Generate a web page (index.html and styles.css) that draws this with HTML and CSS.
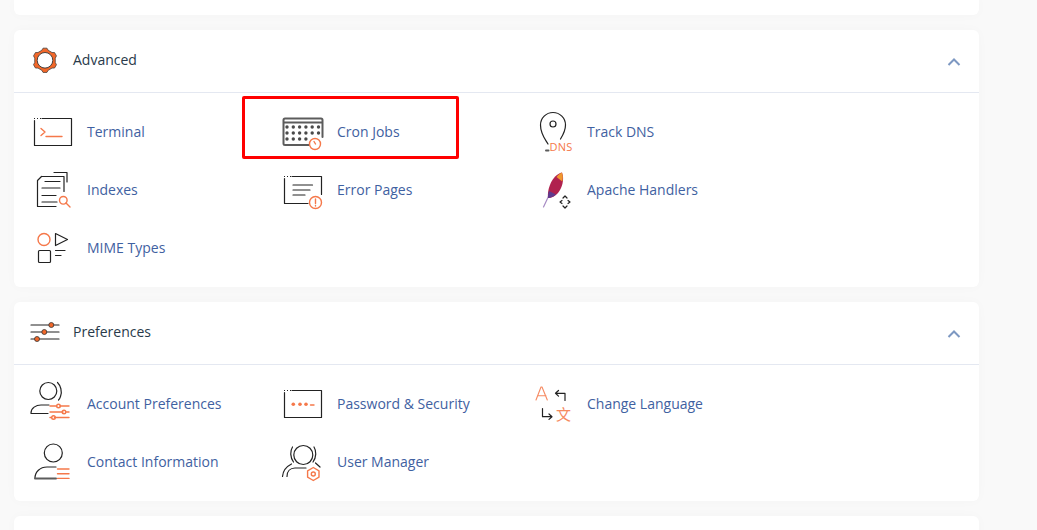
FILE: index.html
```html
<!DOCTYPE html>
<html lang="en">
<head>
<meta charset="utf-8">
<title>cPanel tools</title>
<link rel="stylesheet" href="styles.css">
</head>
<body>
<main class="page">
  <section class="card card-stub"></section>

  <section class="card">
    <header class="card-head">
      <svg class="head-icon" viewBox="30 39.500 42 42">
        <path class="gear-body" d="M41.760 50.810 43.080 48.650H46.920L48.240 50.810 52.030 53 54.560 53.060 56.480 56.390 55.270 58.620V62.980L56.480 65.210 54.560 68.540 52.030 68.600 48.240 70.790 46.920 72.950H43.080L41.760 70.790 37.970 68.600 35.440 68.540 33.520 65.210 34.730 62.980V58.620L33.520 56.390 35.440 53.060 37.970 53z"/>
        <circle class="gear-hole" cx="45" cy="60.800" r="7.800"/>
      </svg>
      <h2 class="card-title">Advanced</h2>
      <svg class="chevron" viewBox="0 0 14 8"><path d="M1.500 7 7 1.500 12.500 7"/></svg>
    </header>
    <div class="tools">
      <a class="tool">
        <svg class="tool-icon" viewBox="30 110 42 42">
          <path class="ink" d="M42 118.500h29.500v27h-37v-25"/>
          <path class="ink dots" d="M34 118.500h8"/>
          <path class="org" d="M41 128.500l4 3.500-4 3.500M46 136.500h16"/>
        </svg>
        <span>Terminal</span>
      </a>
      <a class="tool">
        <svg class="tool-icon" viewBox="280 110 42 42">
          <path class="thick" d="M309 145h-24a1.500 1.500 0 0 1-1.500-1.500V120a1.500 1.500 0 0 1 1.500-1.500h36a1.500 1.500 0 0 1 1.500 1.500v17M284 122.500h38"/>
          <g class="grey-dots">
            <circle cx="287" cy="127" r="1.700"/><circle cx="293.300" cy="127" r="1.700"/><circle cx="299.600" cy="127" r="1.700"/><circle cx="305.900" cy="127" r="1.700"/><circle cx="312.200" cy="127" r="1.700"/><circle cx="318.500" cy="127" r="1.700"/>
            <circle cx="287" cy="133" r="1.700"/><circle cx="293.300" cy="133" r="1.700"/><circle cx="299.600" cy="133" r="1.700"/><circle cx="305.900" cy="133" r="1.700"/><circle cx="312.200" cy="133" r="1.700"/><circle cx="318.500" cy="133" r="1.700"/>
            <circle cx="287" cy="139" r="1.700"/><circle cx="293.300" cy="139" r="1.700"/><circle cx="299.600" cy="139" r="1.700"/><circle cx="305.900" cy="139" r="1.700"/>
          </g>
          <circle class="org badge" cx="315" cy="144" r="5.500"/>
          <path class="org" d="M314 141.500l1.500 2.500"/>
        </svg>
        <span>Cron Jobs</span>
      </a>
      <a class="tool">
        <svg class="tool-icon" viewBox="530 110 42 42">
          <path class="ink" d="M548 144c-3-5-7.500-10-7.500-19a12.500 12.500 0 0 1 25 0c0 6-2.500 10-5 14"/>
          <circle class="ink" cx="553" cy="124" r="3"/>
          <path class="thick" d="M546 150.500h2.500"/>
          <text class="dns" x="549.500" y="150.500">DNS</text>
        </svg>
        <span>Track DNS</span>
      </a>
      <a class="tool">
        <svg class="tool-icon" viewBox="30 168 42 42">
          <path class="ink" d="M54 172.500h13V182"/>
          <path class="ink" d="M41.500 176.500H64v15M56 206.500H37.500v-26l4-4"/>
          <path class="ink" d="M45 181.500h15M42 188h18M42 195.500h14M42 202h15"/>
          <circle class="org badge" cx="63.300" cy="200.300" r="3.800"/>
          <path class="org" d="M66 203l4 4"/>
        </svg>
        <span>Indexes</span>
      </a>
      <a class="tool">
        <svg class="tool-icon" viewBox="280 168 42 42">
          <path class="ink" d="M292 176.500h29.500v18M308 203.500h-23.500v-25"/>
          <path class="ink dots" d="M284 176.500h8"/>
          <path class="ink" d="M293 185h19.500M293 190h17M293 195h12"/>
          <circle class="org badge" cx="315.500" cy="202.500" r="6"/>
          <path class="org" d="M315.500 199v4.500M315.500 205.500v.5"/>
        </svg>
        <span>Error Pages</span>
      </a>
      <a class="tool">
        <svg class="tool-icon" viewBox="530 168 42 42">
          <path class="quill" d="M543.500 207 551 191"/>
          <path class="feather-red" d="M562 172.500c2.500 6 .5 15-4 20.500-2.500 3-6.500 5-10 5-1-9 4-23 14-25.500z"/>
          <path class="feather-org" d="M562 172.500c1 3 1 6 .3 9l-5.800-4.500c1.700-2.200 3.500-3.800 5.500-4.500z"/>
          <path class="feather-pur" d="M548 198c2.500 0 5.500-1.500 8-3.500l-7-3.500c-.8 2.500-1.200 4.700-1 7z"/>
          <path class="ink" d="M563 198l2-2 2 2M563 206l2 2 2-2M562 200.500l-2 1.500 2 1.500M568 200.500l2 1.500-2 1.500"/>
        </svg>
        <span>Apache Handlers</span>
      </a>
      <a class="tool">
        <svg class="tool-icon" viewBox="30 226 42 42">
          <circle class="org" cx="44" cy="239.500" r="6"/>
          <path class="ink" d="M55.500 233.500 67.500 239.500 55.500 245.500z"/>
          <rect class="ink" x="38.500" y="250.500" width="12" height="12" rx="1"/>
          <path class="ink" d="M55.500 250.500h9.500M55.500 255.500h5.500"/>
        </svg>
        <span>MIME Types</span>
      </a>
    </div>
  </section>

  <section class="card">
    <header class="card-head">
      <svg class="head-icon" viewBox="30 312.500 42 42">
        <path class="ink" d="M31 326.500h28M31 333.500h28M31 340.500h28"/>
        <circle class="knob" cx="51.300" cy="326.500" r="2.500"/>
        <circle class="knob" cx="44.300" cy="333.500" r="2.500"/>
        <circle class="knob" cx="37" cy="340.500" r="2.500"/>
      </svg>
      <h2 class="card-title">Preferences</h2>
      <svg class="chevron" viewBox="0 0 14 8"><path d="M1.500 7 7 1.500 12.500 7"/></svg>
    </header>
    <div class="tools">
      <a class="tool">
        <svg class="tool-icon" viewBox="30 382 42 42">
          <circle class="ink" cx="48.300" cy="391" r="8.500"/>
          <path class="ink" d="M57.500 382.500c3 3 5 9 3 14-.5 1.500-1 2.500-2 3.500M31 413c0-5 5-8 10-8h8M31 413.500h17"/>
          <path class="org" d="M50 406h6.500M60 406h9M50 412h13M66.500 412h2.500M50 417.500h1.500M54.500 417.500h14.500"/>
          <circle class="org" cx="58.500" cy="406" r="1.800"/>
          <circle class="org" cx="64" cy="412" r="1.800"/>
          <circle class="org" cx="53.500" cy="417.500" r="1.800"/>
        </svg>
        <span>Account Preferences</span>
      </a>
      <a class="tool">
        <svg class="tool-icon" viewBox="280 382 42 42">
          <path class="ink" d="M292 390.500h29.500v27h-37v-25"/>
          <path class="ink dots" d="M284 390.500h8"/>
          <g class="org-dots"><circle cx="293.300" cy="404.300" r="1.800"/><circle cx="300" cy="404.300" r="1.800"/><circle cx="306" cy="404.300" r="1.800"/></g>
          <path class="org" d="M310.500 405h3.500"/>
        </svg>
        <span>Password &amp; Security</span>
      </a>
      <a class="tool">
        <svg class="tool-icon" viewBox="530 382 42 42">
          <path class="org org-light" d="M536 400l5-13 1 0 5.300 13M537.500 395.700h8.500"/>
          <path class="ink" d="M565 400.500v-7.200h-9.500M558.500 390.500l-3 2.800 3 2.800M542.500 408.500v8.200h9M549 414l3 2.700-3 2.700"/>
          <text class="wen" x="556" y="420">文</text>
        </svg>
        <span>Change Language</span>
      </a>
      <a class="tool">
        <svg class="tool-icon" viewBox="30 440 42 42">
          <circle class="ink" cx="53.300" cy="453" r="9"/>
          <path class="ink" d="M35 478c0-6 5-11 12-11h9"/>
          <path class="thick" d="M35 478.500h21"/>
          <path class="org" d="M57.500 469h11.500M57.500 473.700h11.500M57.500 478.400h11.500"/>
        </svg>
        <span>Contact Information</span>
      </a>
      <a class="tool">
        <svg class="tool-icon" viewBox="280 440 42 42">
          <circle class="ink" cx="303.300" cy="455" r="9.500"/>
          <path class="ink" d="M292.500 447c-2.500 4-2.500 10 1 15M314 447c2.500 4 2.500 10-1 15M282.500 476.500c.5-6 4-10 9-12.500M287 476.500c0-5 3-8.500 8-8.500h11M315.500 463l4.500 4"/>
          <path class="org" d="M313.300 467.500l5.700 3.300v6.400l-5.700 3.300-5.700-3.300v-6.400z"/>
          <circle class="org" cx="313.300" cy="474" r="2"/>
        </svg>
        <span>User Manager</span>
      </a>
    </div>
  </section>

  <section class="card card-end"></section>

  <div class="highlight"></div>
</main>
</body>
</html>
```
FILE: styles.css
```css
* { box-sizing: border-box; }
html, body { height: 100%; }
body {
  margin: 0;
  background: #f9f9f9;
  overflow: hidden;
  font-family: "Open Sans", "Liberation Sans", sans-serif;
}
.page {
  position: relative;
  width: 965px;
  margin-left: 14px;
  display: flex;
  flex-direction: column;
  gap: 15px;
}
.card {
  background: #fff;
  border-radius: 6px;
  box-shadow: 0 0 12px rgba(0, 0, 0, 0.025);
}
.card-stub { height: 15px; border-radius: 0 0 6px 6px; }
.card-end { height: 40px; }
.card-head {
  height: 63px;
  display: flex;
  align-items: center;
  padding: 0 18px 2px 16px;
  border-bottom: 1px solid #e4e8f1;
}
.head-icon { width: 42px; height: 42px; flex: none; overflow: visible; }
.card-title {
  margin: 0 0 0 1px;
  flex: 1;
  font-size: 14px;
  line-height: 20px;
  font-weight: 400;
  color: #293a4a;
}
.chevron { width: 14px; height: 8px; margin-top: 3px; fill: none; stroke: #7d98c2; stroke-width: 2; }
.tools {
  display: grid;
  grid-template-columns: repeat(3, 250px);
  grid-auto-rows: 58px;
  padding: 9px 16px 11px;
}
.tool {
  display: flex;
  align-items: center;
  gap: 15px;
  font-size: 14px;
  color: #3f61a1;
  text-decoration: none;
}
.tool-icon { width: 42px; height: 42px; flex: none; overflow: visible; }

.ink, .org, .thick, .quill { fill: none; stroke-width: 1.2; stroke-linecap: round; stroke-linejoin: round; }
.ink { stroke: #222; }
.org { stroke: #f5784a; stroke-width: 1.4; }
.org-light { stroke: #f68a62; stroke-width: 1.1; }
.org.badge { fill: #fff; }
.thick { stroke: #5c5c5c; stroke-width: 2; }
.dots { stroke-dasharray: 1 2; stroke-width: 1; stroke-linecap: butt; }
.grey-dots { fill: #4a4a4a; }
.org-dots { fill: #f5784a; }
.dns { font-family: "Open Sans", sans-serif; font-size: 11px; fill: #f5784a; letter-spacing: 0.3px; }
.wen { font-family: "Noto Sans CJK SC", sans-serif; font-size: 15px; fill: #f68a62; }
.quill { stroke: #a78cc4; }
.feather-red { fill: #b0224f; }
.feather-org { fill: #f0982f; }
.feather-pur { fill: #5f3a8e; }
.knob { fill: #f2682a; stroke: #333; stroke-width: 0.8; }
.gear-body { fill: #f2682a; stroke: #333; stroke-width: 0.7; stroke-linejoin: round; }
.gear-hole { fill: #fff; stroke: #333; stroke-width: 0.9; }

.highlight {
  position: absolute;
  left: 228px;
  top: 96px;
  width: 217px;
  height: 63px;
  border: 3px solid #f00;
  border-radius: 2px;
}
```
